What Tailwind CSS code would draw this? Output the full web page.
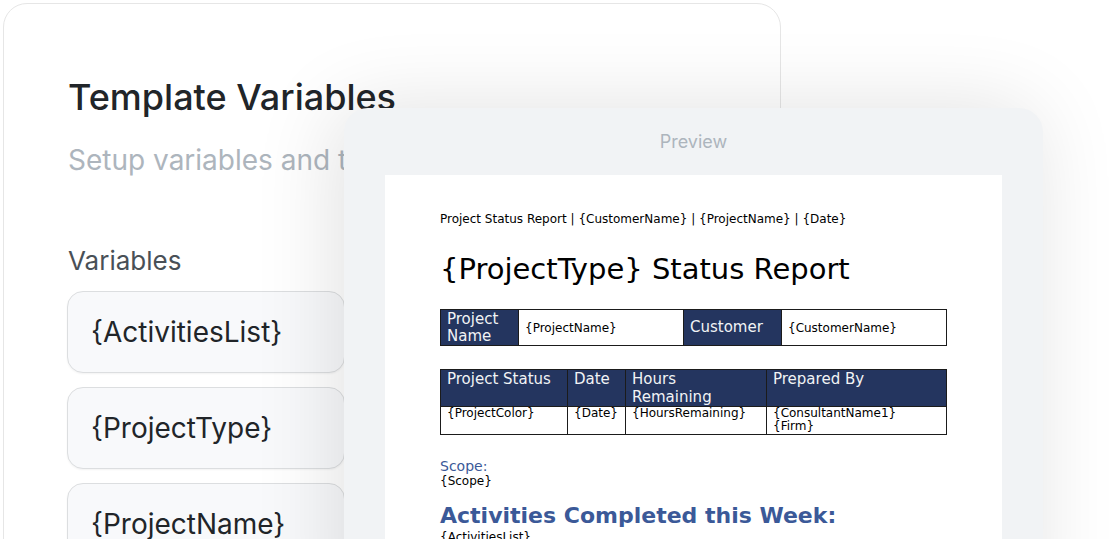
<!DOCTYPE html>
<html lang="en">
<head>
<meta charset="utf-8">
<meta name="viewport" content="width=device-width, initial-scale=1">
<title>Template Variables</title>
<script src="https://cdn.jsdelivr.net/npm/@tailwindcss/browser@4"></script>
</head>
<body class="bg-white font-['Inter',sans-serif]">
<main class="relative h-screen overflow-hidden pt-[3px] pl-[3px] pr-[333px]">
  <section class="min-h-full rounded-[24px] border border-[#e6e6e6] bg-white px-16 pt-[69px]">
    <h1 class="text-[36px] leading-12 font-medium text-[#212529]">Template Variables</h1>
    <p class="mt-[19px] text-[28px] leading-10 whitespace-nowrap text-[#adb5bd]">Setup variables and types</p>
    <h2 class="mt-[65px] text-[26px] leading-8 text-[#495057]">Variables</h2>
    <div class="-ml-px mt-[14px] flex w-[278px] flex-col gap-[14px]">
      <input type="text" aria-label="Variable 1" value="{ActivitiesList}" class="h-[82px] w-full rounded-[16px] border border-[#dcdee0] bg-[#f8f9fb] px-[23px] text-[28px] text-[#212529] shadow-xs">
      <input type="text" aria-label="Variable 2" value="{ProjectType}" class="h-[82px] w-full rounded-[16px] border border-[#dcdee0] bg-[#f8f9fb] px-[23px] text-[28px] text-[#212529] shadow-xs">
      <input type="text" aria-label="Variable 3" value="{ProjectName}" class="h-[82px] w-full rounded-[16px] border border-[#dcdee0] bg-[#f8f9fb] px-[23px] text-[28px] text-[#212529] shadow-xs">
    </div>
  </section>

  <section class="absolute top-[108px] right-[71px] left-[344px] rounded-t-[24px] bg-[#f1f3f5] px-[41px] shadow-[-8px_0_84px_rgba(0,0,0,0.12)]">
    <h2 class="pt-[22px] pb-[21px] text-center text-[18px] leading-6 text-[#adb5bd]">Preview</h2>
    <article class="bg-white px-[55px] pt-[37px] pb-20 font-['DejaVu_Sans',sans-serif] text-[12px] leading-[14px] text-black">
      <p class="whitespace-nowrap">Project Status Report | {CustomerName} | {ProjectName} | {Date}</p>
      <h3 class="mt-[23px] text-[29px] leading-10 whitespace-nowrap">{ProjectType} Status Report</h3>
      <table class="mt-5 w-full table-fixed border-collapse text-left">
        <colgroup><col class="w-[78px]"><col class="w-[165px]"><col class="w-[98px]"><col></colgroup>
        <tbody>
          <tr class="h-[36px]">
            <th class="border border-[#1b1b1b] bg-[#24355f] px-[6px] text-[15px] leading-[17px] font-normal text-[#f1f3f5]">Project Name</th>
            <td class="border border-[#1b1b1b] px-[6px]">{ProjectName}</td>
            <th class="border border-[#1b1b1b] bg-[#24355f] px-[6px] text-[15px] leading-[17px] font-normal text-[#f1f3f5]">Customer</th>
            <td class="border border-[#1b1b1b] px-[6px]">{CustomerName}</td>
          </tr>
        </tbody>
      </table>
      <table class="mt-[23px] w-full table-fixed border-collapse text-left align-top">
        <colgroup><col class="w-[127px]"><col class="w-[58px]"><col class="w-[141px]"><col></colgroup>
        <thead>
          <tr class="h-[36px] bg-[#24355f] align-top text-[15px] leading-[18px] text-[#f1f3f5]">
            <th class="border border-[#1b1b1b] px-[6px] font-normal">Project Status</th>
            <th class="border border-[#1b1b1b] px-[6px] font-normal">Date</th>
            <th class="border border-[#1b1b1b] px-[6px] font-normal">Hours<br>Remaining</th>
            <th class="border border-[#1b1b1b] px-[6px] font-normal">Prepared By</th>
          </tr>
        </thead>
        <tbody>
          <tr class="h-7 align-top leading-[13px]">
            <td class="border border-[#1b1b1b] px-[6px]">{ProjectColor}</td>
            <td class="border border-[#1b1b1b] px-[6px]">{Date}</td>
            <td class="border border-[#1b1b1b] px-[6px]">{HoursRemaining}</td>
            <td class="border border-[#1b1b1b] px-[6px]">{ConsultantName1}<br>{Firm}</td>
          </tr>
        </tbody>
      </table>
      <h4 class="mt-[23px] text-[14px] leading-4 text-[#3b5998]">Scope:</h4>
      <p>{Scope}</p>
      <h4 class="mt-[14px] text-[22px] leading-7 font-bold whitespace-nowrap text-[#3b5998]">Activities Completed this Week:</h4>
      <p>{ActivitiesList}</p>
    </article>
  </section>
</main>
</body>
</html>
